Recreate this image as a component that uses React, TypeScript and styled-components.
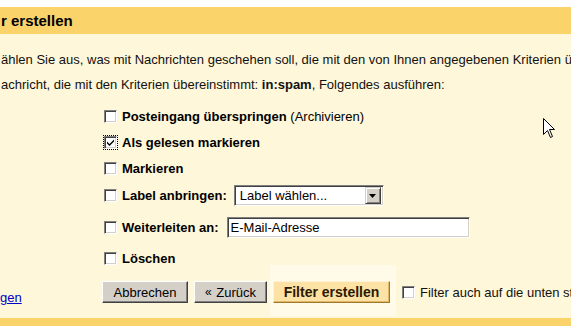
import styled, { createGlobalStyle } from "styled-components";

const GlobalStyle = createGlobalStyle`
  html, body {
    margin: 0;
    padding: 0;
    background: #ffffff;
  }
  body {
    font-family: "Liberation Sans", Arial, sans-serif;
    font-size: 13px;
    color: #000000;
  }
`;

const Page = styled.div`
  position: relative;
  width: 571px;
  height: 334px;
  overflow: hidden;
  padding-top: 7px;
  box-sizing: border-box;
  background: #ffffff;
`;

const Header = styled.div`
  height: 27px;
  background: #fad46b;
  display: flex;
  align-items: center;
  padding-left: 1px;
  font-size: 15px;
  font-weight: bold;
  color: #000000;
  white-space: nowrap;
`;

const Body = styled.div`
  background: #fff7d9;
  height: 292px;
  display: flex;
  flex-direction: column;
`;

const Intro = styled.div`
  padding-top: 13px;
  white-space: nowrap;
`;

const Line = styled.div`
  height: 25px;
  line-height: 25px;
  padding-left: 1px;
  color: #111111;
`;

const Options = styled.div`
  display: flex;
  flex-direction: column;
  padding-left: 104px;
  margin-top: 6px;
`;

const Row = styled.div<{ $h: number }>`
  display: flex;
  align-items: center;
  height: ${(p) => p.$h}px;
  white-space: nowrap;
`;

const Box = styled.span<{ $focus?: boolean }>`
  position: relative;
  width: 13px;
  height: 13px;
  box-sizing: border-box;
  flex: none;
  background: #ffffff;
  border-style: solid;
  border-width: 1px;
  border-color: #808080 #ffffff #ffffff #808080;
  box-shadow: inset 1px 1px 0 #404040, inset -1px -1px 0 #d4d0c8;
  margin-right: 5px;
  outline: ${(p) => (p.$focus ? "1px dotted #000" : "none")};
  outline-offset: 0px;
  display: flex;
  align-items: center;
  justify-content: center;
`;

const Strong = styled.span`
  font-weight: bold;
`;

const Plain = styled.span`
  font-weight: normal;
`;

const Select = styled.div`
  display: flex;
  align-items: center;
  width: 150px;
  height: 21px;
  flex: none;
  box-sizing: border-box;
  margin-left: 7px;
  background: #ffffff;
  border-style: solid;
  border-width: 1px;
  border-color: #808080 #ffffff #ffffff #808080;
  box-shadow: inset 1px 1px 0 #404040, inset -1px -1px 0 #d4d0c8;
  padding: 2px;
`;

const SelectText = styled.span`
  flex: 1;
  padding-left: 3px;
`;

const SelectArrow = styled.span`
  width: 16px;
  height: 17px;
  box-sizing: border-box;
  background: #d4d0c8;
  border-style: solid;
  border-width: 1px;
  border-color: #d4d0c8 #404040 #404040 #d4d0c8;
  box-shadow: inset 1px 1px 0 #ffffff, inset -1px -1px 0 #808080;
  display: flex;
  align-items: center;
  justify-content: center;
`;

const TextInput = styled.div`
  width: 243px;
  height: 21px;
  flex: none;
  box-sizing: border-box;
  margin-left: 8px;
  background: #ffffff;
  border-style: solid;
  border-width: 1px;
  border-color: #808080 #ffffff #ffffff #808080;
  box-shadow: inset 1px 1px 0 #404040, inset -1px -1px 0 #d4d0c8;
  padding: 0 3px;
  line-height: 19px;
`;

const Actions = styled.div`
  display: flex;
  align-items: center;
  margin-top: 9px;
  height: 22px;
  white-space: nowrap;
`;

const LinkCell = styled.div`
  width: 102px;
  flex: none;
  align-self: flex-end;
  margin-bottom: -2px;
`;

const Link = styled.a`
  color: #0000cc;
  text-decoration: underline;
`;

const Button = styled.span<{ $primary?: boolean; $w: number }>`
  width: ${(p) => p.$w}px;
  height: 22px;
  flex: none;
  box-sizing: border-box;
  display: flex;
  align-items: center;
  justify-content: center;
  background: ${(p) => (p.$primary ? "#fde2a6" : "#d4d0c8")};
  color: ${(p) => (p.$primary ? "#2b1a00" : "#000000")};
  font-weight: ${(p) => (p.$primary ? "bold" : "normal")};
  font-size: ${(p) => (p.$primary ? "14px" : "13px")};
  border-style: solid;
  border-width: 1px;
  border-color: ${(p) =>
    p.$primary
      ? "#fff3d6 #a07a2a #a07a2a #fff3d6"
      : "#ffffff #404040 #404040 #ffffff"};
  box-shadow: ${(p) =>
    p.$primary ? "inset -1px -1px 0 #e0b767" : "inset -1px -1px 0 #808080"};
  margin-right: 6px;
`;

const Glow = styled.span`
  display: flex;
  flex: none;
  align-items: center;
  background: #fffbe8;
  padding: 16px 0 13px 3px;
  margin: -16px 6px -13px -3px;
`;

const Small = styled.span`
  font-size: 12px;
  margin-right: 1px;
`;

const After = styled.span`
  display: flex;
  flex: none;
  align-items: center;
  color: #111111;
`;

const BottomBar = styled.div`
  margin-top: auto;
  height: 8px;
  background: #fad46b;
`;

const Cursor = styled.svg`
  position: absolute;
  left: 543px;
  top: 118px;
`;

const Check = ({ checked, focus }: { checked?: boolean; focus?: boolean }) => (
  <Box $focus={focus}>
    {checked && (
      <svg width="9" height="9" viewBox="0 0 9 9">
        <path d="M1 3.5 L3.5 6 L8 1.5 L8 3.5 L3.5 8 L1 5.5 Z" fill="#000" />
      </svg>
    )}
  </Box>
);

export default function App() {
  return (
    <>
      <GlobalStyle />
      <Page>
        <Header>r erstellen</Header>
        <Body>
          <Intro>
            <Line>
              ählen Sie aus, was mit Nachrichten geschehen soll, die mit den
              von Ihnen angegebenen Kriterien ü
            </Line>
            <Line>
              achricht, die mit den Kriterien übereinstimmt: <Strong>in:spam</Strong>
              , Folgendes ausführen:
            </Line>
          </Intro>
          <Options>
            <Row $h={26}>
              <Check />
              <Strong>Posteingang überspringen</Strong>
              <Plain>&nbsp;(Archivieren)</Plain>
            </Row>
            <Row $h={26}>
              <Check checked focus />
              <Strong>Als gelesen markieren</Strong>
            </Row>
            <Row $h={26}>
              <Check />
              <Strong>Markieren</Strong>
            </Row>
            <Row $h={29}>
              <Check />
              <Strong>Label anbringen:</Strong>
              <Select>
                <SelectText>Label wählen...</SelectText>
                <SelectArrow>
                  <svg width="7" height="4" viewBox="0 0 7 4">
                    <path d="M0 0 H7 L3.5 4 Z" fill="#000" />
                  </svg>
                </SelectArrow>
              </Select>
            </Row>
            <Row $h={34}>
              <Check />
              <Strong>Weiterleiten an:</Strong>
              <TextInput>E-Mail-Adresse</TextInput>
            </Row>
            <Row $h={28}>
              <Check />
              <Strong>Löschen</Strong>
            </Row>
          </Options>
          <Actions>
            <LinkCell>
              <Link href="#">gen</Link>
            </LinkCell>
            <Button $w={86}>Abbrechen</Button>
            <Button $w={73}>
              <Small>«</Small>&nbsp;Zurück
            </Button>
            <Glow>
              <Button $primary $w={117}>
                Filter erstellen
              </Button>
            </Glow>
            <After>
              <Check />
              Filter auch auf die unten st
            </After>
          </Actions>
          <BottomBar />
        </Body>
        <Cursor width="13" height="21" viewBox="0 0 13 21">
          <path
            d="M0.5 0.5 L0.5 16.5 L4.5 12.5 L7.5 19.5 L9.5 18.5 L6.5 11.5 L11.5 11.5 Z"
            fill="#fff"
            stroke="#000"
            strokeWidth="1"
          />
        </Cursor>
      </Page>
    </>
  );
}
